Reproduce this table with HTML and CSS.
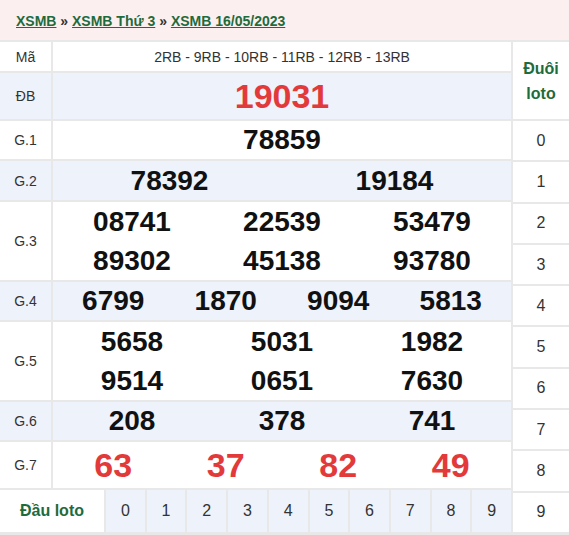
FILE: index.html
```html
<!DOCTYPE html>
<html lang="vi">
<head>
<meta charset="utf-8">
<title>XSMB 16/05/2023</title>
<link rel="stylesheet" href="styles.css">
</head>
<body>
<div class="header">
  <nav class="crumbs"><a href="#">XSMB</a> » <a href="#">XSMB Thứ 3</a> » <a href="#">XSMB 16/05/2023</a></nav>
</div>
<div class="board">
  <div class="results">
    <div class="row h-ma">
      <div class="label">Mã</div>
      <div class="cell codes">2RB - 9RB - 10RB - 11RB - 12RB - 13RB</div>
    </div>
    <div class="row h-db alt">
      <div class="label">ĐB</div>
      <div class="cell nums c1"><span class="n special">19031</span></div>
    </div>
    <div class="row h-1">
      <div class="label">G.1</div>
      <div class="cell nums c1"><span class="n">78859</span></div>
    </div>
    <div class="row h-1b alt">
      <div class="label">G.2</div>
      <div class="cell nums c2"><span class="n">78392</span><span class="n">19184</span></div>
    </div>
    <div class="row h-2">
      <div class="label">G.3</div>
      <div class="cell nums c3 two"><span class="n">08741</span><span class="n">22539</span><span class="n">53479</span><span class="n">89302</span><span class="n">45138</span><span class="n">93780</span></div>
    </div>
    <div class="row h-1 alt">
      <div class="label">G.4</div>
      <div class="cell nums c4"><span class="n">6799</span><span class="n">1870</span><span class="n">9094</span><span class="n">5813</span></div>
    </div>
    <div class="row h-2">
      <div class="label">G.5</div>
      <div class="cell nums c3 two"><span class="n">5658</span><span class="n">5031</span><span class="n">1982</span><span class="n">9514</span><span class="n">0651</span><span class="n">7630</span></div>
    </div>
    <div class="row h-1 alt">
      <div class="label">G.6</div>
      <div class="cell nums c3"><span class="n">208</span><span class="n">378</span><span class="n">741</span></div>
    </div>
    <div class="row h-7">
      <div class="label">G.7</div>
      <div class="cell nums c4"><span class="n red">63</span><span class="n red">37</span><span class="n red">82</span><span class="n red">49</span></div>
    </div>
    <div class="heads">
      <div class="heads-title">Đầu loto</div>
      <div class="d">0</div><div class="d">1</div><div class="d">2</div><div class="d">3</div><div class="d">4</div>
      <div class="d">5</div><div class="d">6</div><div class="d">7</div><div class="d">8</div><div class="d">9</div>
    </div>
  </div>
  <div class="tails">
    <div class="tails-title">Đuôi<br>loto</div>
    <div class="t">0</div><div class="t">1</div><div class="t">2</div><div class="t">3</div><div class="t">4</div>
    <div class="t">5</div><div class="t">6</div><div class="t">7</div><div class="t">8</div><div class="t">9</div>
  </div>
</div>
</body>
</html>
```
FILE: styles.css
```css
* { box-sizing: border-box; }
html, body { margin: 0; padding: 0; background: #fff; }
body {
  font-family: "Liberation Sans", Arial, sans-serif;
  color: #333;
  width: 569px;
  overflow: hidden;
}
.header {
  height: 40px;
  background: #fcefef;
  display: flex;
  align-items: center;
  padding: 0 16px;
}
.crumbs {
  font-size: 14px;
  font-weight: bold;
  color: #333;
  padding-top: 1px;
}
.crumbs a {
  color: #1e6b3c;
  text-decoration: underline;
}
.board {
  display: flex;
  gap: 2px;
  background: #e8e8e8;
  padding: 2px 0 3px;
}
.results {
  width: 511px;
  display: flex;
  flex-direction: column;
  gap: 2px;
}
.row {
  display: grid;
  grid-template-columns: 51px 1fr;
  gap: 2px;
}
.h-ma { height: 29px; }
.h-db { height: 46px; }
.h-1 { height: 38px; }
.h-1b { height: 39px; }
.h-2 { height: 78px; }
.h-7 { height: 46px; }
.label, .cell {
  background: #fff;
  display: flex;
  align-items: center;
  justify-content: center;
}
.alt .label, .alt .cell { background: #eef2fa; }
.label { font-size: 14px; color: #333; }
.codes { font-size: 14px; color: #333; }
.nums {
  display: grid;
  padding: 0 4px;
  align-items: center;
  justify-items: center;
}
.c1 { grid-template-columns: 1fr; }
.c2 { grid-template-columns: repeat(2, 1fr); }
.c3 { grid-template-columns: repeat(3, 1fr); }
.c4 { grid-template-columns: repeat(4, 1fr); }
.two { grid-template-rows: repeat(2, 1fr); }
.n {
  font-size: 28px;
  font-weight: bold;
  color: #111;
  line-height: 1;
}
.special { font-size: 34px; color: #e23a3a; }
.red { font-size: 34px; color: #e23a3a; }
.heads {
  display: grid;
  grid-template-columns: 104px repeat(10, 1fr);
  gap: 2px;
  height: 42px;
}
.heads-title {
  background: #fff;
  color: #1e6b3c;
  font-weight: bold;
  font-size: 16px;
  display: flex;
  align-items: center;
  justify-content: center;
}
.d {
  background: #eef2fa;
  font-size: 16px;
  color: #333;
  display: flex;
  align-items: center;
  justify-content: center;
}
.tails {
  flex: 1;
  display: flex;
  flex-direction: column;
  gap: 2px;
}
.tails-title {
  height: 77px;
  flex: none;
  background: #fff;
  color: #1e6b3c;
  font-weight: bold;
  font-size: 16px;
  line-height: 25px;
  text-align: center;
  display: flex;
  align-items: center;
  justify-content: center;
}
.t {
  flex: 1;
  background: #fff;
  font-size: 16px;
  color: #333;
  display: flex;
  align-items: center;
  justify-content: center;
}
```
